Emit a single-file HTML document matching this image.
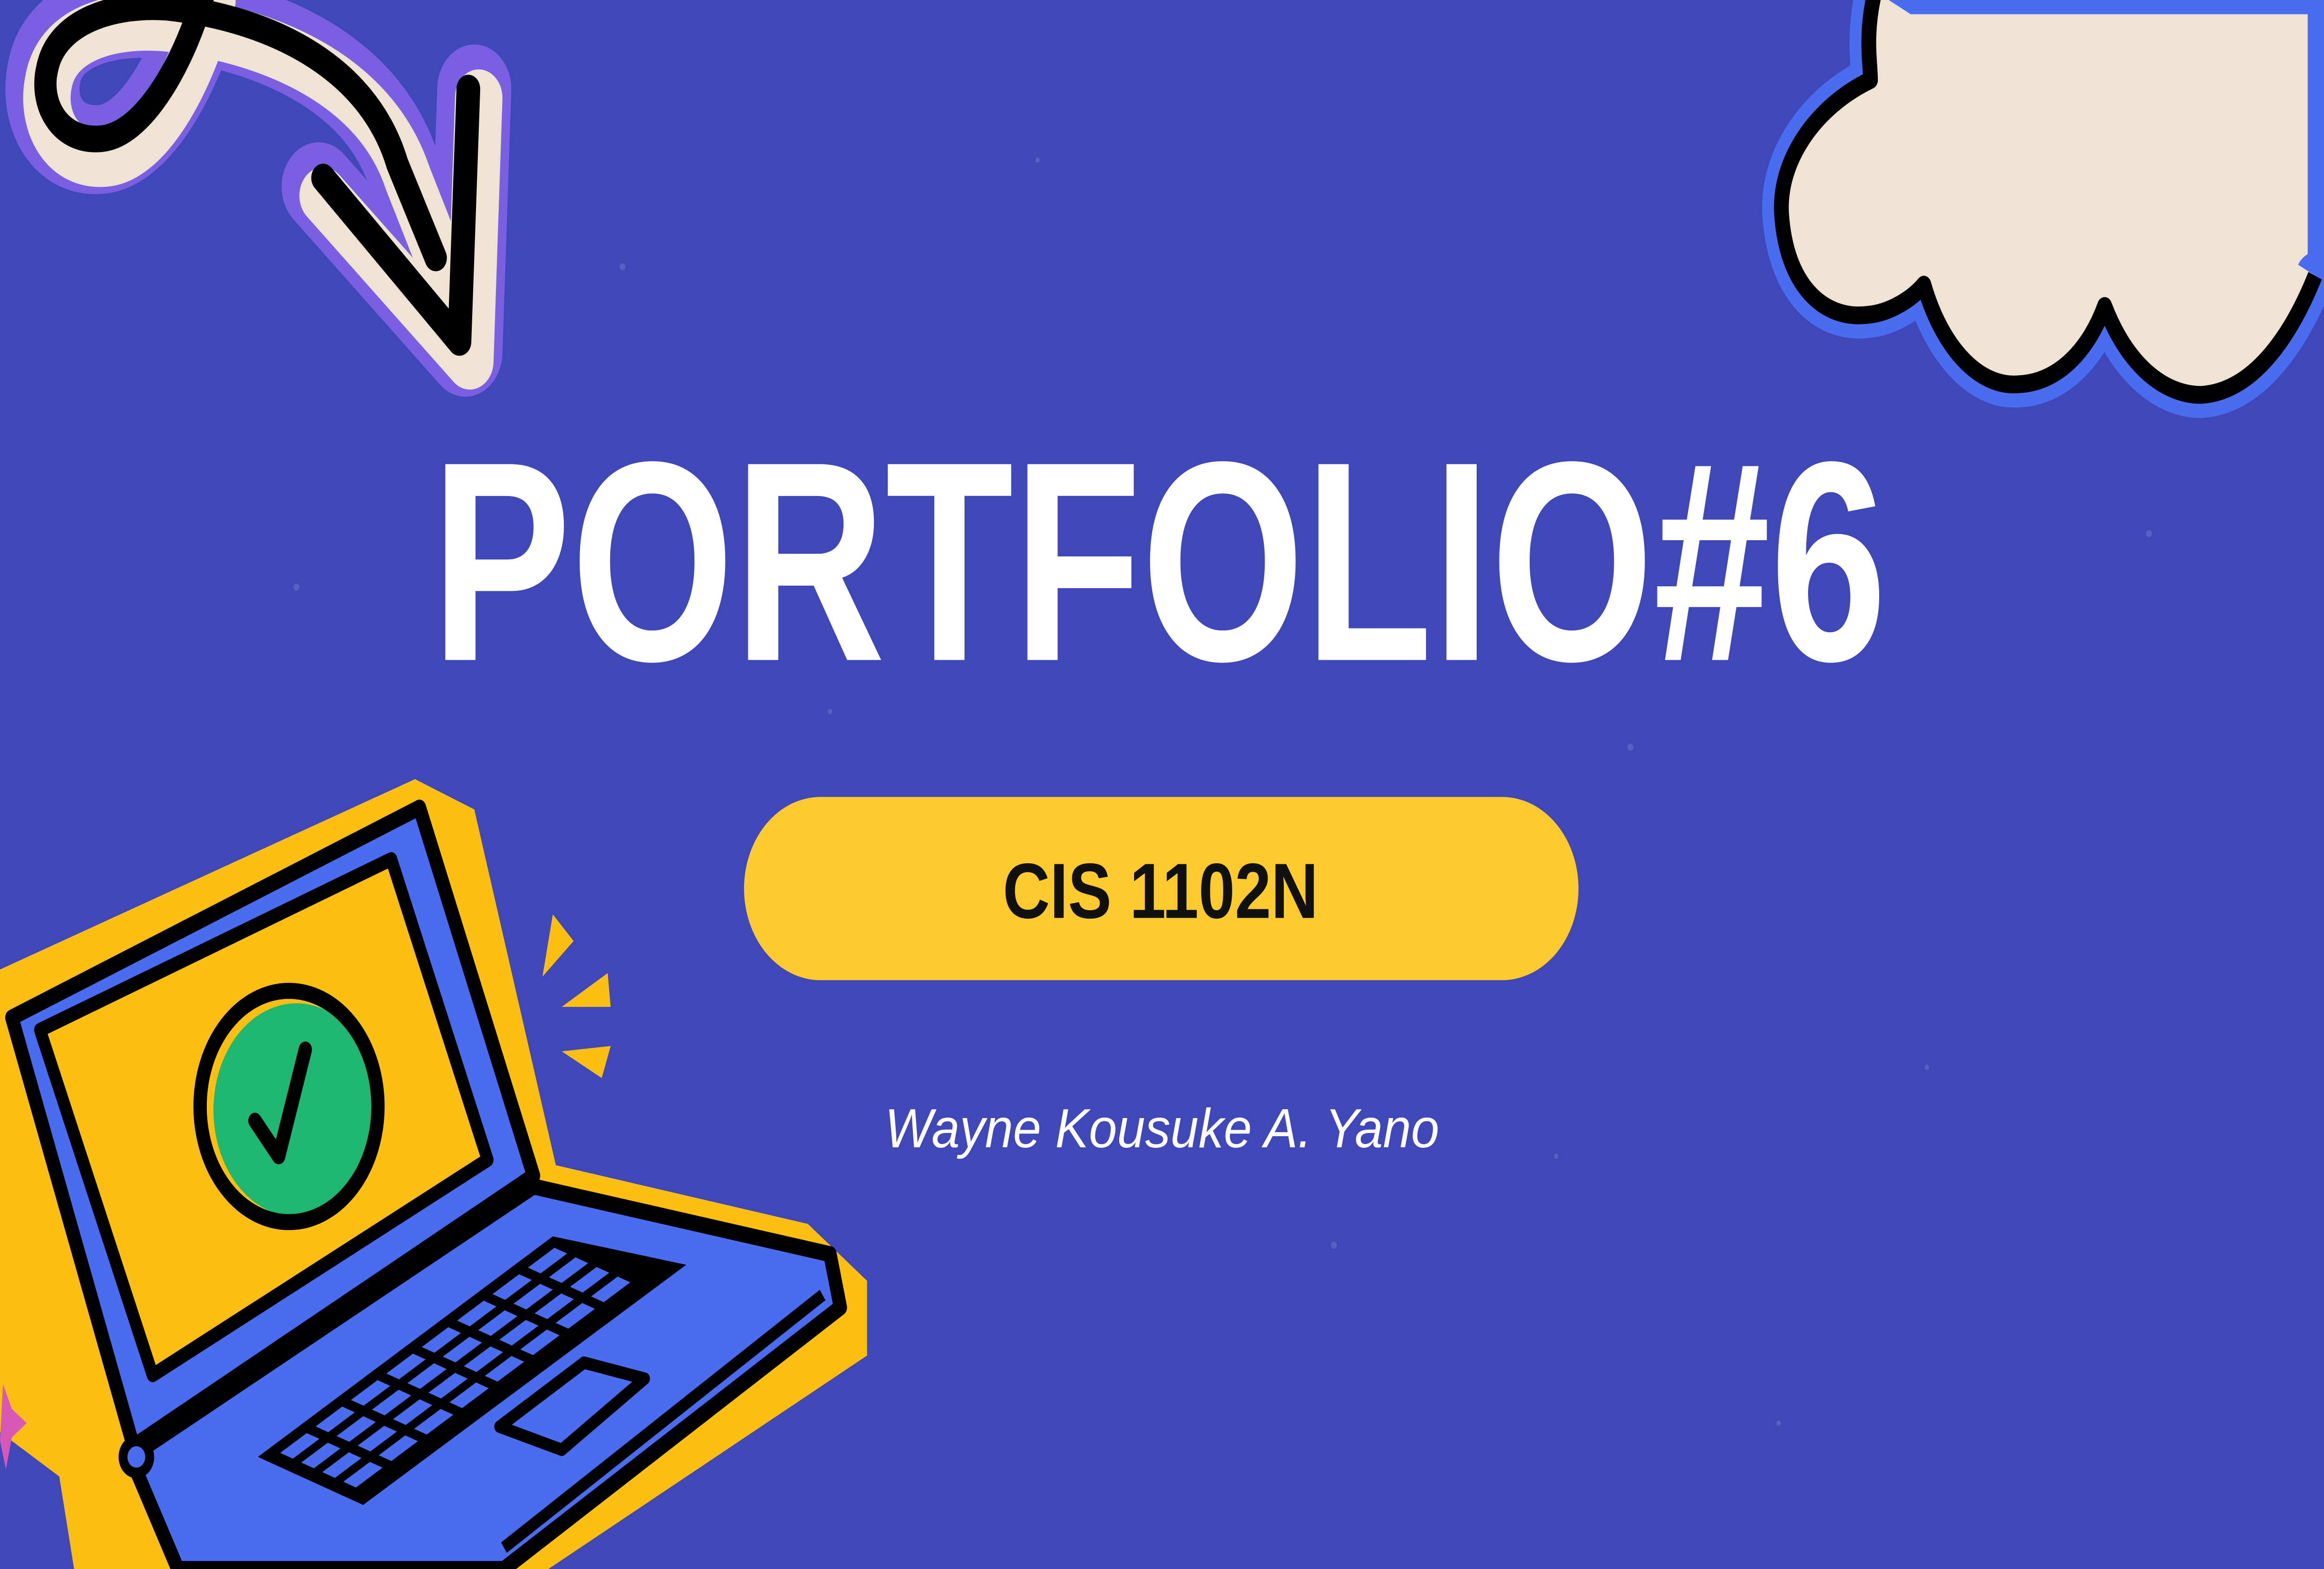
<!DOCTYPE html>
<html><head><meta charset="utf-8"><style>
html,body{margin:0;padding:0;width:100%;height:100%;overflow:hidden;}
body{background:#3f47b9;}
svg{display:block;width:100vw;height:100vh;}
</style></head><body>
<svg viewBox="0 0 1568 882" preserveAspectRatio="none" xmlns="http://www.w3.org/2000/svg">
<rect width="1568" height="882" fill="#3f47b9"/>
<g fill="#6a72cc" opacity="0.6">
<circle cx="420" cy="150" r="2"/><circle cx="700" cy="90" r="1.5"/><circle cx="1100" cy="420" r="2"/><circle cx="1300" cy="600" r="1.5"/><circle cx="900" cy="700" r="2"/><circle cx="560" cy="400" r="1.5"/><circle cx="1450" cy="300" r="2"/><circle cx="1200" cy="800" r="1.5"/><circle cx="200" cy="330" r="2"/><circle cx="1050" cy="650" r="1.5"/>
</g>
<!-- arrow -->
<g fill="none" stroke-linecap="round" stroke-linejoin="round">
<path d="M140,-5 C128,35 100,82 68,84 C38,86 24,62 30,40 C36,15 70,5 110,8 C180,15 250,40 272,95 L298,150" stroke="#7b5fe2" stroke-width="50"/>
<path d="M215,105 L314,198 L320,50" stroke="#7b5fe2" stroke-width="50"/>
<path d="M140,-5 C128,35 100,82 68,84 C38,86 24,62 30,40 C36,15 70,5 110,8 C180,15 250,40 272,95 L298,150" stroke="#efe3d3" stroke-width="32" transform="translate(3,5)"/>
<path d="M215,105 L314,198 L320,50" stroke="#efe3d3" stroke-width="32" transform="translate(3,5)"/>
<path d="M138,-5 C126,32 98,76 68,78 C40,80 26,58 32,38 C38,14 72,2 112,4 C180,10 248,36 268,92 L294,145" stroke="#000" stroke-width="15"/>
<path d="M218,100 L310,192 L316,50" stroke="#000" stroke-width="16"/>
</g>
<!-- cloud -->
<path d="M1265,-5 C1258,20 1262,35 1262,45 C1225,60 1200,90 1202,120 C1205,160 1230,180 1260,177 C1275,176 1290,168 1298,160 C1310,195 1335,218 1362,216 C1390,215 1410,195 1420,172 C1435,205 1460,222 1485,222 C1525,220 1550,180 1562,155 L1570,150 L1570,-5 Z" fill="#efe3d3" stroke="#4a6cf0" stroke-width="26" stroke-linejoin="round"/>
<path d="M1265,-5 C1258,20 1262,35 1262,45 C1225,60 1200,90 1202,120 C1205,160 1230,180 1260,177 C1275,176 1290,168 1298,160 C1310,195 1335,218 1362,216 C1390,215 1410,195 1420,172 C1435,205 1460,222 1485,222 C1525,220 1550,180 1562,155" fill="#efe3d3" stroke="#000" stroke-width="10" stroke-linejoin="round"/>
<!-- laptop -->
<path d="M0,545 L280,438 L320,455 L375,655 L545,688 L585,720 L585,762 L370,882 L50,882 L40,830 L0,805 Z" fill="#fdbf12"/>
<path d="M8,572 L283,454 L360,661 L90,813 Z" fill="#4a6cf0" stroke="#000" stroke-width="9" stroke-linejoin="round"/>
<path d="M27,579 L264,483 L329,652 L103,773 Z" fill="#fdbf12" stroke="#000" stroke-width="8" stroke-linejoin="round"/>
<ellipse cx="200" cy="624" rx="56" ry="60" fill="#1fb873"/>
<ellipse cx="195" cy="622" rx="60" ry="65" fill="none" stroke="#000" stroke-width="9"/>
<path d="M172,630 L188,650 L206,590" fill="none" stroke="#000" stroke-width="9" stroke-linecap="round" stroke-linejoin="round"/>
<path d="M88,819 L360,667 L560,705 L567,735 L340,882 L120,882 Z" fill="#4a6cf0" stroke="#000" stroke-width="9" stroke-linejoin="round"/>
<path d="M555,728 L340,870" stroke="#000" stroke-width="7"/>
<circle cx="92" cy="819" r="9" fill="#4a6cf0" stroke="#000" stroke-width="6"/>
<path d="M174,819 L373,695 L463,711 L245,846 Z" fill="#000"/>
<g transform="matrix(199,-124,71,27,174,819)" fill="#4a6cf0">
<rect x="0.04" y="0.1" width="0.09" height="0.12"/><rect x="0.16" y="0.1" width="0.09" height="0.12"/><rect x="0.28" y="0.1" width="0.09" height="0.12"/><rect x="0.40" y="0.1" width="0.09" height="0.12"/><rect x="0.52" y="0.1" width="0.09" height="0.12"/><rect x="0.64" y="0.1" width="0.09" height="0.12"/><rect x="0.76" y="0.1" width="0.09" height="0.12"/><rect x="0.88" y="0.1" width="0.09" height="0.12"/>
<rect x="0.04" y="0.3" width="0.09" height="0.12"/><rect x="0.16" y="0.3" width="0.09" height="0.12"/><rect x="0.28" y="0.3" width="0.09" height="0.12"/><rect x="0.40" y="0.3" width="0.09" height="0.12"/><rect x="0.52" y="0.3" width="0.09" height="0.12"/><rect x="0.64" y="0.3" width="0.09" height="0.12"/><rect x="0.76" y="0.3" width="0.09" height="0.12"/><rect x="0.88" y="0.3" width="0.09" height="0.12"/>
<rect x="0.04" y="0.5" width="0.09" height="0.12"/><rect x="0.16" y="0.5" width="0.09" height="0.12"/><rect x="0.28" y="0.5" width="0.09" height="0.12"/><rect x="0.40" y="0.5" width="0.09" height="0.12"/><rect x="0.52" y="0.5" width="0.09" height="0.12"/><rect x="0.64" y="0.5" width="0.09" height="0.12"/><rect x="0.76" y="0.5" width="0.09" height="0.12"/><rect x="0.88" y="0.5" width="0.09" height="0.12"/>
<rect x="0.04" y="0.7" width="0.09" height="0.12"/><rect x="0.16" y="0.7" width="0.09" height="0.12"/><rect x="0.28" y="0.7" width="0.09" height="0.12"/><rect x="0.40" y="0.7" width="0.09" height="0.12"/><rect x="0.52" y="0.7" width="0.09" height="0.12"/><rect x="0.64" y="0.7" width="0.09" height="0.12"/><rect x="0.76" y="0.7" width="0.09" height="0.12"/><rect x="0.88" y="0.7" width="0.09" height="0.12"/>
</g>
<path d="M337,802 L394,766 L435,775 L379,815 Z" fill="#4a6cf0" stroke="#000" stroke-width="7" stroke-linejoin="round"/>
<g fill="#fdbf12">
<path d="M373,514 L387,529 L366,549 Z"/><path d="M379,566 L410,547 L412,566 Z"/><path d="M379,591 L412,588 L406,606 Z"/>
</g>
<path d="M2,778 L8,792 L18,800 L8,808 L4,826 L0,810 Z" fill="#d957b6"/>
<!-- text -->
<text x="782" y="371" text-anchor="middle" font-family="Liberation Sans, sans-serif" font-weight="bold" font-size="160" fill="#fff" textLength="982" lengthAdjust="spacingAndGlyphs">PORTFOLIO#6</text>
<rect x="502" y="448" width="563" height="103" rx="51.5" fill="#fecb2f"/>
<text x="783" y="516" text-anchor="middle" font-family="Liberation Sans, sans-serif" font-weight="bold" font-size="44" fill="#111">CIS 1102N</text>
<text x="784" y="645" text-anchor="middle" font-family="Liberation Sans, sans-serif" font-style="italic" font-size="31" fill="#fff" textLength="374" lengthAdjust="spacingAndGlyphs">Wayne Kousuke A. Yano</text>
</svg>
</body></html>
